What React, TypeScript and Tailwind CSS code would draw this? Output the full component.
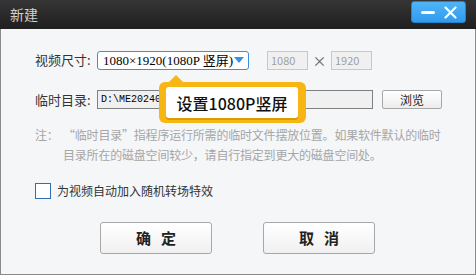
export default function App() {
  const ui = { fontFamily: '"Noto Sans CJK SC", "Noto Sans", sans-serif' }
  const serif = { fontFamily: '"Liberation Serif", "Noto Sans CJK SC", serif' }
  const mono = { fontFamily: '"Liberation Mono", monospace' }

  return (
    <div className="relative w-[476px] h-[275px] flex flex-col text-[#333]" style={ui}>
      {/* title bar */}
      <div className="h-[29px] flex justify-between bg-gradient-to-b from-[#353535] to-[#1f1f1f]">
        <span className="pl-[10px] pt-[5px] text-[14px] leading-[18px] text-[#d0d0d0]">新建</span>
        <div className="mr-[10px] mt-px w-[55px] h-[22px] flex items-center justify-around px-[4px] rounded-[3px] border border-[#2b7fc4] bg-gradient-to-b from-[#4fb4f7] to-[#2f9bef]">
          <span className="block w-[14px] h-[3px] rounded-full bg-white" />
          <svg width="13" height="13" viewBox="0 0 13 13">
            <path d="M1.5 1.5 L11.5 11.5 M11.5 1.5 L1.5 11.5" stroke="white" strokeWidth="2.2" strokeLinecap="round" />
          </svg>
        </div>
      </div>

      {/* body */}
      <div className="flex-1 flex flex-col bg-[#f5f6f8] border-x border-b border-[#8a8a8a] pl-[34px] pt-[22px]">
        <div className="flex items-center h-[18px]">
          <span className="w-[62px] text-[13px]">视频尺寸:</span>
          <div className="w-[152px] h-[19px] flex items-center rounded-[3px] border border-[#3c8ee0] bg-white pl-[5px] pr-[4px]">
            <span className="flex-1 text-[13px] leading-none text-black whitespace-nowrap" style={serif}>1080×1920(1080P 竖屏)</span>
            <svg className="shrink-0" width="10" height="6" viewBox="0 0 10 6"><path d="M0 0 H10 L5 6 Z" fill="#3c8ee0" /></svg>
          </div>
          <div className="ml-[18px] w-[41px] h-[19px] border border-[#c8c8c8] bg-[#f0f0f0] text-[11px] text-[#a0a0a0] pl-[3px] leading-[17px]">1080</div>
          <span className="w-[23px] text-center text-[14px] text-[#666]">×</span>
          <div className="w-[41px] h-[19px] border border-[#c8c8c8] bg-[#f0f0f0] text-[11px] text-[#a0a0a0] pl-[3px] leading-[17px]">1920</div>
        </div>

        <div className="flex items-center h-[19px] mt-[21px]">
          <span className="w-[62px] text-[13px]">临时目录:</span>
          <div className="w-[276px] h-[19px] border border-[#808080] bg-[#f0f0f0] pl-[3px] text-[10px] leading-[17px] text-black overflow-hidden whitespace-nowrap" style={mono}>D:\ME20240101</div>
          <button className="ml-[9px] w-[60px] h-[19px] rounded-[2px] border border-[#a8a8a8] bg-gradient-to-b from-white to-[#ececec] text-[12px] leading-none text-[#222]">浏览</button>
        </div>

        <div className="mt-[16px] flex text-[12px] tracking-[-0.2px] leading-[20px] text-[#a6a6a6]">
          <span className="w-[28px]">注：</span>
          <p>
            “临时目录”指程序运行所需的临时文件摆放位置。如果软件默认的临时
            <br />
            目录所在的磁盘空间较少，请自行指定到更大的磁盘空间处。
          </p>
        </div>

        <label className="mt-[17px] flex items-center">
          <span className="w-[16px] h-[16px] border border-[#2f6fb5] bg-white" />
          <span className="ml-[6px] text-[12px] text-[#333]">为视频自动加入随机转场特效</span>
        </label>

        <div className="mt-[22px] ml-[65px] flex gap-[51px]">
          <button className="w-[112px] h-[32px] rounded-[3px] border border-[#a8a8a8] bg-gradient-to-b from-white to-[#f0f0f0] text-[15px] font-bold tracking-[10px] pl-[10px] text-[#222]">确定</button>
          <button className="w-[112px] h-[32px] rounded-[3px] border border-[#a8a8a8] bg-gradient-to-b from-white to-[#f0f0f0] text-[15px] font-bold tracking-[10px] pl-[10px] text-[#222]">取消</button>
        </div>
      </div>

      {/* callout */}
      <div className="absolute left-[159px] top-[75px]">
        <svg className="absolute left-[9px] top-0" width="16" height="8" viewBox="0 0 16 8"><path d="M0 8 L8 0 L16 8 Z" fill="#f8b614" /></svg>
        <div className="mt-[7px] w-[147px] h-[41px] rounded-[6px] bg-[#f8b614] pt-[5px] pl-[7px]">
          <div className="w-[132px] h-[31px] rounded-[3px] bg-white shadow-[0_2px_0_#d99c00] flex items-center justify-center text-[16px] font-medium text-[#111]">
            设置1080P竖屏
          </div>
        </div>
      </div>
    </div>
  )
}
